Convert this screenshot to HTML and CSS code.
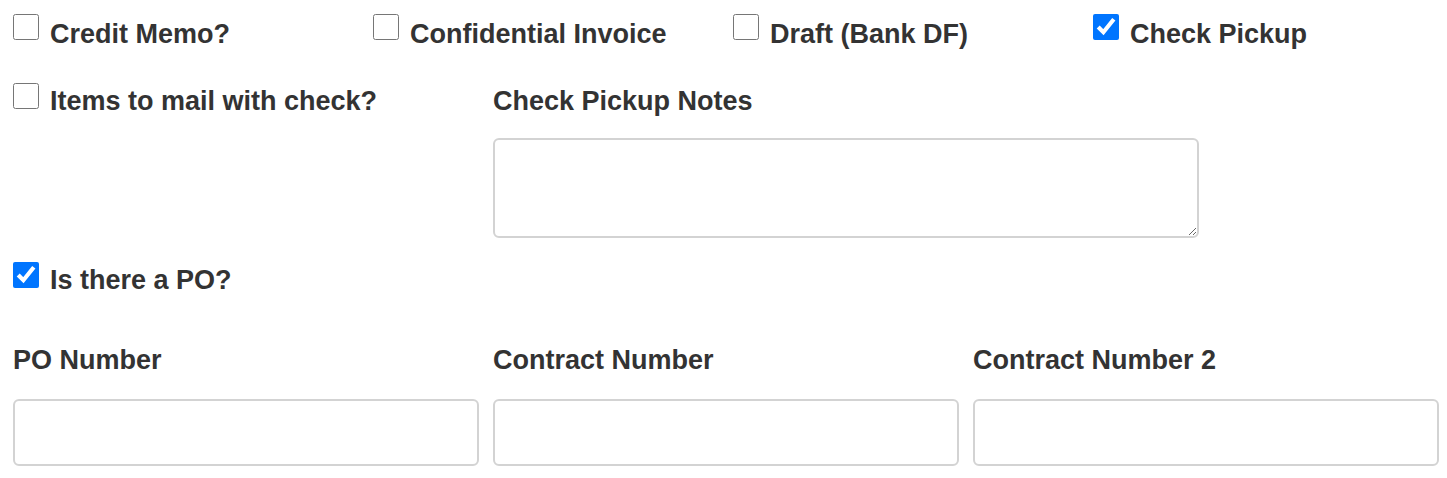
FILE: index.html
```html
<!DOCTYPE html>
<html lang="en">

    <head>
        <meta charset="UTF-8">
        <meta name="viewport" content="width=device-width, initial-scale=1.0">
        <title>Invoice Options</title>

        <link rel="stylesheet" href="styles.css">
    </head>

    <body>

        <main class="form">
            <div class="row row-flags">
                <label class="check col-3">
                    <input type="checkbox" name="credit_memo" id="credit_memo">
                    Credit Memo?
                </label>
                <label class="check col-3">
                    <input type="checkbox" name="confidential" id="confidential">
                    Confidential Invoice
                </label>
                <label class="check col-3">
                    <input type="checkbox" name="draft" id="draft">
                    Draft (Bank DF)
                </label>
                <label class="check col-3">
                    <input type="checkbox" name="check_pickup" id="check_pickup" checked>
                    Check Pickup
                </label>
            </div>

            <div class="row row-pickup">
                <label class="check col-4">
                    <input type="checkbox" name="mail_items" id="mail_items">
                    Items to mail with check?
                </label>
                <div class="field field-notes col-6">
                    <label for="pickup_notes">Check Pickup Notes</label>
                    <textarea name="pickup_notes" id="pickup_notes"></textarea>
                </div>
            </div>

            <div class="row row-po">
                <label class="check col-4">
                    <input type="checkbox" name="has_po" id="has_po" checked>
                    Is there a PO?
                </label>
            </div>

            <div class="row row-numbers">
                <div class="field col-4">
                    <label for="po_number">PO Number</label>
                    <input type="text" name="po_number" id="po_number">
                </div>
                <div class="field col-4">
                    <label for="contract_number">Contract Number</label>
                    <input type="text" name="contract_number" id="contract_number">
                </div>
                <div class="field col-4">
                    <label for="contract_number_2">Contract Number 2</label>
                    <input type="text" name="contract_number_2" id="contract_number_2">
                </div>
            </div>
        </main>

    </body>

</html>
```

FILE: styles.css
```css
body {
    font-family: "Liberation Sans", Arial, sans-serif;
    background-color: #fff;
    color: #333;
    margin: 0;
    padding: 0;
}

.form {
    width: 1426px;
    margin-left: 13px;
    padding-top: 14px;
}

.row {
    display: grid;
    grid-template-columns: repeat(12, 1fr);
    column-gap: 14px;
    align-items: start;
}

.row-pickup {
    margin-top: 27px;
}

.row-po {
    margin-top: 22px;
}

.row-numbers {
    margin-top: 40px;
}

.col-3 {
    grid-column: span 3;
}

.col-4 {
    grid-column: span 4;
}

.col-6 {
    grid-column: span 6;
}

.check {
    display: flex;
    align-items: flex-start;
    gap: 11px;
    font-size: 27px;
    font-weight: bold;
    line-height: 40px;
    white-space: nowrap;
}

.check input {
    width: 26px;
    height: 26px;
    margin: 2px 0 0 0;
    accent-color: #0075ff;
    flex-shrink: 0;
}

.row-flags .check input {
    margin-top: 0;
}

.field {
    display: flex;
    flex-direction: column;
}

.field label {
    font-size: 27px;
    font-weight: bold;
    line-height: 40px;
    margin-bottom: 19px;
}

.field-notes label {
    margin-bottom: 17px;
}

.field input,
.field textarea {
    border: 2px solid #d3d3d3;
    border-radius: 6px;
    box-sizing: border-box;
    width: 100%;
    font-family: inherit;
    font-size: 20px;
    padding: 8px 12px;
    background-color: #fff;
}

.field input {
    height: 67px;
}

.field textarea {
    height: 100px;
}
```
